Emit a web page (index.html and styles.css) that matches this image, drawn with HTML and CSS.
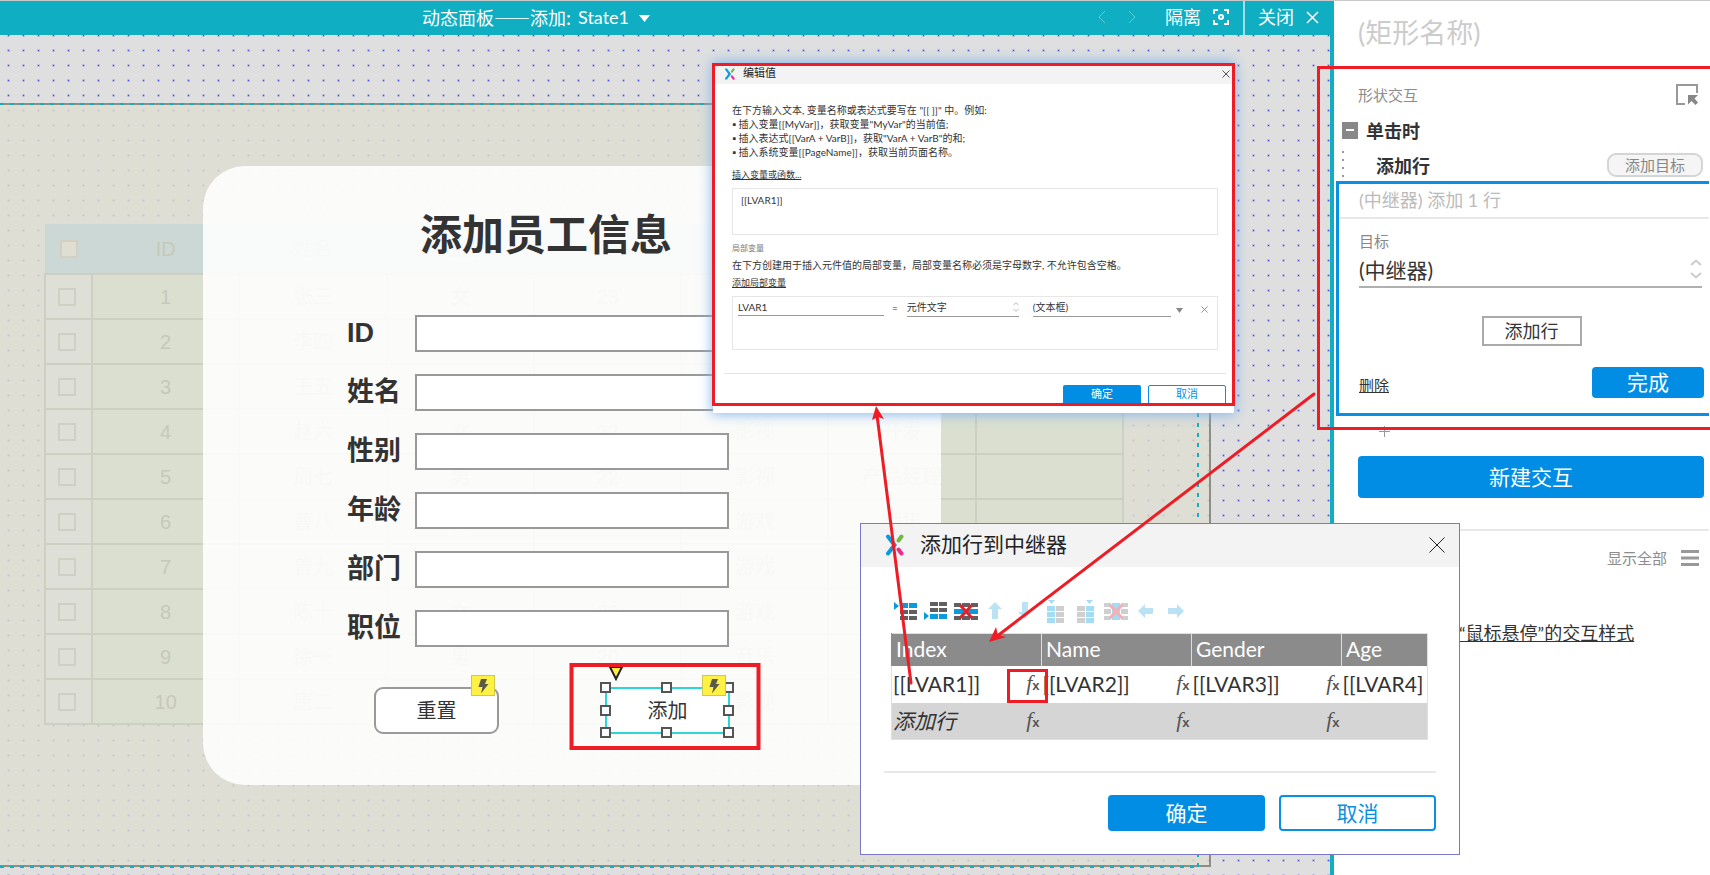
FILE: index.html
```html
<!DOCTYPE html>
<html lang="zh-CN">
<head>
<meta charset="utf-8">
<title>动态面板——添加</title>
<link rel="stylesheet" href="styles.css">
</head>
<body>
<svg class="defs" aria-hidden="true">
  <symbol id="logo" viewBox="0 0 18 22"><g fill="none" stroke-width="4" stroke-linecap="round"><path d="M2 2.500 8.500 11 2 19.500" stroke="#0a9bdc"/><path d="M12.500 6.500 15.500 2.500" stroke="#72b944"/><path d="M12.500 15.500 15.500 19.500" stroke="#ee2a8b"/></g></symbol>
  <symbol id="close" viewBox="0 0 16 16"><path d="M.5.500 15.500 15.500M15.500.500.500 15.500" fill="none" stroke="currentColor"/></symbol>
  <symbol id="close-small" viewBox="0 0 8 8"><path d="M.5.500 7.500 7.500M7.500.500.500 7.500" fill="none" stroke="currentColor"/></symbol>
  <symbol id="bolt" viewBox="0 0 12 16"><path d="M4 1h6L8 6h3.500L4 15.500 5.500 9H1.500z" fill="#5a5a4a"/></symbol>
  <symbol id="spin" viewBox="0 0 12 20"><path d="M1 6 6 1.500 11 6M1 14l5 4.500 5-4.500" fill="none" stroke="currentColor" stroke-width="2"/></symbol>
</svg>
<div class="app">
  <main class="editor">
    <header class="bar">
      <button class="state"><span class="panel-name">动态面板——添加:</span><span>State1</span><svg width="11" height="7"><path d="M0 0h11L5.500 7z" fill="#fff"/></svg></button>
      <div class="bar-tools">
        <button class="nav" aria-label="上一个"><svg width="8" height="14"><path d="M7 1 1 7l6 6" fill="none" stroke="#5bcbd8"/></svg></button>
        <button class="nav" aria-label="下一个"><svg width="8" height="14"><path d="M1 1l6 6-6 6" fill="none" stroke="#5bcbd8"/></svg></button>
        <button class="isolate">隔离 <svg width="16" height="16" fill="none" stroke="#fff" stroke-width="2"><path d="M1 5V1h4M11 1h4v4M15 11v4h-4M5 15H1v-4"/><circle cx="8" cy="8" r="2"/></svg></button>
        <button class="exit">关闭 <svg width="13" height="13" viewBox="0 0 13 13"><path d="M1 1l11 11M12 1 1 12" stroke="#fff" stroke-width="1.500"/></svg></button>
      </div>
    </header>
    <div class="canvas">
      <section class="artboard">
        <table class="staff">
          <thead><tr><th class="pick"><input type="checkbox" aria-label="全选"></th><th>ID</th><th>姓名</th><th>性别</th><th>年龄</th><th>部门</th><th>职位</th><th>操作</th></tr></thead>
          <tbody>
          <tr><td class="pick"><input type="checkbox" aria-label="1"></td><td>1</td><td>张三</td><td>女</td><td>23</td><td>影视</td><td>开发</td><td></td></tr>
          <tr><td class="pick"><input type="checkbox" aria-label="2"></td><td>2</td><td>李四</td><td>男</td><td>22</td><td>影视</td><td>开发</td><td></td></tr>
          <tr><td class="pick"><input type="checkbox" aria-label="3"></td><td>3</td><td>王五</td><td>男</td><td>22</td><td>影视</td><td>开发</td><td></td></tr>
          <tr><td class="pick"><input type="checkbox" aria-label="4"></td><td>4</td><td>赵六</td><td>女</td><td>22</td><td>影视</td><td>开发</td><td></td></tr>
          <tr><td class="pick"><input type="checkbox" aria-label="5"></td><td>5</td><td>周七</td><td>男</td><td>22</td><td>影视</td><td>产品经理</td><td></td></tr>
          <tr><td class="pick"><input type="checkbox" aria-label="6"></td><td>6</td><td>曹八</td><td>女</td><td>21</td><td>游戏</td><td>销售</td><td></td></tr>
          <tr><td class="pick"><input type="checkbox" aria-label="7"></td><td>7</td><td>曾九</td><td>男</td><td>20</td><td>游戏</td><td>销售</td><td></td></tr>
          <tr><td class="pick"><input type="checkbox" aria-label="8"></td><td>8</td><td>陈十</td><td>女</td><td>20</td><td>游戏</td><td>开发</td><td></td></tr>
          <tr><td class="pick"><input type="checkbox" aria-label="9"></td><td>9</td><td>徐一</td><td>男</td><td>20</td><td>音乐</td><td>开发</td><td></td></tr>
          <tr><td class="pick"><input type="checkbox" aria-label="10"></td><td>10</td><td>唐二</td><td>女</td><td>21</td><td>影视</td><td>开发</td><td></td></tr>
          </tbody>
        </table>
        <form class="sheet">
          <h1>添加员工信息</h1>
          <div class="fields">
            <label for="f1">ID</label><input id="f1" type="text">
            <label for="f2">姓名</label><input id="f2" type="text">
            <label for="f3">性别</label><input id="f3" type="text">
            <label for="f4">年龄</label><input id="f4" type="text">
            <label for="f5">部门</label><input id="f5" type="text">
            <label for="f6">职位</label><input id="f6" type="text">
          </div>
          <div class="actions">
            <div class="node"><button type="button" class="reset">重置</button><span class="tag"><svg width="12" height="16"><use href="#bolt"/></svg></span></div>
            <div class="node"><button type="button" class="add">添加</button>
              <svg class="handles" width="140" height="72">
                <path d="M13 3h12l-6 12z" fill="#fff143" stroke="#222" stroke-width="2"/>
                <path d="M4 19h9v9H4zM65 19h9v9h-9zM127 19h9v9h-9zM4 42h9v9H4zM127 42h9v9h-9zM4 64h9v9H4zM65 64h9v9h-9zM127 64h9v9h-9z" fill="#fff" stroke="#555" stroke-width="2"/>
              </svg>
              <span class="tag"><svg width="12" height="16"><use href="#bolt"/></svg></span></div>
          </div>
        </form>
      </section>
    </div>
  </main>

  <aside class="side">
    <input class="shape-name" type="text" aria-label="名称" placeholder="(矩形名称)">
    <section class="events">
      <div class="row head"><span>形状交互</span><button aria-label="选择目标"><svg width="22" height="21" viewBox="0 0 22 21"><path d="M9 20H1V1h20v8" fill="none" stroke="#999" stroke-width="2"/><path d="M12 11h10l-3.500 3.500 3.500 4-2.500 2.500-4-4L12 20.500z" fill="#888"/></svg></button></div>
      <div class="event"><button class="fold" aria-label="折叠"></button>单击时</div>
      <div class="row action"><span>添加行</span><button class="pill">添加目标</button></div>
      <div class="card">
        <div class="summary">(中继器) 添加 1 行</div>
        <div class="card-body">
          <label for="target">目标</label>
          <div class="pickbox"><select id="target"><option>(中继器)</option></select><svg width="12" height="20"><use href="#spin"/></svg></div>
          <button class="plain">添加行</button>
          <div class="row done"><a href="#">删除</a><button class="primary">完成</button></div>
        </div>
      </div>
      <button class="plus" aria-label="添加动作"><svg width="11" height="11"><path d="M5.500 0v11M0 5.500h11" stroke="#999"/></svg></button>
      <button class="primary new">新建交互</button>
    </section>
    <section class="styles">
      <div class="row all"><span>显示全部</span><button aria-label="菜单"><svg width="18" height="16"><path d="M0 1.500h18M0 8h18M0 14.500h18" stroke="#999" stroke-width="3"/></svg></button></div>
      <a class="hover" href="#">“鼠标悬停”的交互样式</a>
    </section>
  </aside>

  <section class="dialog value" role="dialog" aria-label="编辑值">
    <header><svg width="10" height="12"><use href="#logo"/></svg><h2>编辑值</h2><button aria-label="关闭"><svg width="8" height="8"><use href="#close-small"/></svg></button></header>
    <div class="value-body">
      <p>在下方输入文本, 变量名称或表达式要写在 "[[ ]]" 中。例如:</p>
      <ul><li>▪ 插入变量[[MyVar]]，获取变量"MyVar"的当前值;</li><li>▪ 插入表达式[[VarA + VarB]]，获取"VarA + VarB"的和;</li><li>▪ 插入系统变量[[PageName]]，获取当前页面名称。</li></ul>
      <a href="#">插入变量或函数...</a>
      <textarea aria-label="表达式">[[LVAR1]]</textarea>
      <h3>局部变量</h3>
      <p>在下方创建用于插入元件值的局部变量，局部变量名称必须是字母数字, 不允许包含空格。</p>
      <a href="#">添加局部变量</a>
      <div class="vars">
        <input class="v-name" type="text" aria-label="变量名" value="LVAR1"><span class="eq">=</span>
        <div class="v-kind"><select aria-label="类型"><option>元件文字</option></select><svg width="6" height="10"><use href="#spin"/></svg></div>
        <select class="v-target" aria-label="元件"><option>(文本框)</option></select><svg class="caret" width="7" height="5"><path d="M0 0h7L3.500 5z" fill="#888"/></svg>
        <button aria-label="移除"><svg width="7" height="7"><use href="#close-small"/></svg></button>
      </div>
    </div>
    <footer><button class="primary">确定</button><button class="outline">取消</button></footer>
  </section>

  <section class="dialog rows" role="dialog" aria-label="添加行到中继器">
    <header><svg width="18" height="22"><use href="#logo"/></svg><h2>添加行到中继器</h2><button aria-label="关闭"><svg width="16" height="16"><use href="#close"/></svg></button></header>
    <div class="rows-body">
      <div class="tools">
        <button aria-label="上方插入行"><svg width="24" height="24"><path d="M0 2l5 4-5 4z" fill="#0a9bdc"/><path d="M6 3h8v5H6zM15 3h8v5h-8z" fill="#0a9bdc"/><path d="M6 10h8v4H6zM15 10h8v4h-8zM6 16h8v4H6zM15 16h8v4h-8z" fill="#606060"/></svg></button>
        <button aria-label="下方插入行"><svg width="24" height="24"><path d="M0 12l5 4-5 4z" fill="#0a9bdc"/><path d="M6 14h8v5H6zM15 14h8v5h-8z" fill="#0a9bdc"/><path d="M6 2h8v4H6zM15 2h8v4h-8zM6 8h8v4H6zM15 8h8v4h-8z" fill="#606060"/></svg></button>
        <button aria-label="删除行"><svg width="24" height="24"><path d="M0 3h7v4H0zM8 3h8v4H8zM17 3h7v4h-7zM0 16h7v4H0zM8 16h8v4H8zM17 16h7v4h-7z" fill="#606060"/><path d="M0 9h24v5H0z" fill="#0a9bdc"/><path d="M6 5l12 13M18 5 6 18" stroke="#e3202a" stroke-width="3"/></svg></button>
        <button aria-label="上移"><svg width="24" height="24"><path d="M11 2l7 7h-4v10H8V9H4z" fill="#b9e2f5"/></svg></button>
        <button aria-label="下移"><svg width="24" height="24"><path d="M11 19l7-7h-4V2H8v10H4z" fill="#b9e2f5"/></svg></button>
        <button aria-label="左侧插入列"><svg width="24" height="24"><path d="M4 0h7L7.500 4z" fill="#a5dcf5"/><path d="M3 6h8v5H3zM3 12h8v5H3zM3 18h8v5H3z" fill="#a5dcf5"/><path d="M12 6h8v5h-8zM12 12h8v5h-8zM12 18h8v5h-8z" fill="#cfcfcf"/></svg></button>
        <button aria-label="右侧插入列"><svg width="24" height="24"><path d="M12 0h7l-3.500 4z" fill="#a5dcf5"/><path d="M12 6h8v5h-8zM12 12h8v5h-8zM12 18h8v5h-8z" fill="#a5dcf5"/><path d="M3 6h8v5H3zM3 12h8v5H3zM3 18h8v5H3z" fill="#cfcfcf"/></svg></button>
        <button aria-label="删除列"><svg width="24" height="24"><path d="M0 3h7v4H0zM17 3h7v4h-7zM0 9h7v5H0zM17 9h7v5h-7zM0 16h7v4H0zM17 16h7v4h-7z" fill="#cfcfcf"/><path d="M8 3h8v17H8z" fill="#a5dcf5"/><path d="M6 5l12 13M18 5 6 18" stroke="#f6aeb2" stroke-width="3"/></svg></button>
        <button aria-label="左移"><svg width="24" height="24"><path d="M4 11l7-7v4h8v6h-8v4z" fill="#b9e2f5"/></svg></button>
        <button aria-label="右移"><svg width="24" height="24"><path d="M20 11l-7-7v4H4v6h9v4z" fill="#b9e2f5"/></svg></button>
      </div>
      <table class="grid">
        <thead><tr><th>Index</th><th>Name</th><th>Gender</th><th>Age</th></tr></thead>
        <tbody>
          <tr><td><div>[[LVAR1]]<button class="fx"><i>f</i>x</button></div></td><td><div>[[LVAR2]]<button class="fx"><i>f</i>x</button></div></td><td><div>[[LVAR3]]<button class="fx"><i>f</i>x</button></div></td><td><div>[[LVAR4]</div></td></tr>
          <tr class="blank"><td><div><em>添加行</em><button class="fx"><i>f</i>x</button></div></td><td><div><button class="fx"><i>f</i>x</button></div></td><td><div><button class="fx"><i>f</i>x</button></div></td><td></td></tr>
        </tbody>
      </table>
    </div>
    <footer><button class="primary">确定</button><button class="outline">取消</button></footer>
  </section>

  <svg class="marks" aria-hidden="true">
    <g fill="none" stroke="#ee1c25">
      <rect x="713.500" y="64.500" width="520" height="340" stroke-width="3"/>
      <rect x="1318.500" y="67.500" width="420" height="361" stroke-width="3"/>
      <rect x="571.500" y="665" width="187" height="83" stroke-width="4"/>
      <rect x="1008.500" y="670.500" width="38" height="31" stroke-width="3"/>
      <path d="M911 683 877 415M1314 394 996 637" stroke-width="3" stroke-linecap="round"/>
    </g>
    <path d="M876 406l8 13-6-2-6 3zM989 642l7-15 2 8 8 2z" fill="#ee1c25"/>
  </svg>
</div>
</body>
</html>
```

FILE: styles.css
```css
* { box-sizing: border-box; }
body { margin: 0; font-family: Lato, "Noto Sans CJK SC", sans-serif; color: #333; }
button, input, select, textarea { font: inherit; color: inherit; margin: 0; padding: 0; border: 0; background: none; border-radius: 0; }
button { display: inline-flex; align-items: center; justify-content: center; white-space: nowrap; }
select { appearance: none; }
h1, h2, h3, p, ul { margin: 0; padding: 0; list-style: none; }
a { color: inherit; }
.defs { position: absolute; width: 0; height: 0; }

.app { position: relative; display: flex; min-height: 100vh; overflow: hidden; border-top: 1px solid #c9c9c9; }
.editor { flex: 1; display: flex; flex-direction: column; min-width: 0; }

/* top bar */
.bar { display: flex; justify-content: space-between; height: 34px; padding-left: 422px; background: #10aec2; color: #fff; font-size: 18px; line-height: 32px; }
.bar button { padding-bottom: 2px; }
.state { gap: 7px; }
.state svg { margin: 2px 0 0 3px; }
.panel-name { font-family: "Noto Sans CJK SC", sans-serif; }
.bar-tools { display: flex; }
.nav { width: 30px; }
.bar .isolate { gap: 12px; padding: 0 14px 2px 18px; border-right: 2px solid #9fe0e8; }
.bar .exit { gap: 12px; padding: 0 15px 2px 13px; }

/* canvas */
.canvas { position: relative; flex: 1; border-right: 4px solid #10aec2; background: radial-gradient(circle, #4a4ae6 0, rgba(74, 74, 230, .3) 1px, transparent 2px) 1px 8px / 15px 15px #dfdfdf; }
.artboard { position: absolute; left: 0; top: 68px; width: 1211px; padding: 119px 0 140px 44px; border: solid #8e8e86; border-width: 2px 2px 2px 0; background: radial-gradient(circle, #c0c0d2 0, rgba(192, 192, 210, .3) 1px, transparent 2px) 1px -2px / 15px 15px #deded5; }
.artboard::before { content: ""; position: absolute; left: 0; right: 10px; top: -2px; bottom: -3px; background: repeating-linear-gradient(90deg, #10aec2 0 4px, transparent 4px 10px) 0 0 / 100% 2px no-repeat, repeating-linear-gradient(90deg, #10aec2 0 4px, transparent 4px 10px) 0 100% / 100% 2px no-repeat, repeating-linear-gradient(#10aec2 0 4px, transparent 4px 10px) 100% 0 / 2px 100% no-repeat; }

.staff { position: relative; width: 1080px; table-layout: fixed; border-collapse: collapse; color: #c6c8ba; font: 20px/24px "Liberation Sans", "Noto Sans CJK SC", sans-serif; text-align: center; }
.staff th { height: 50px; padding: 0; background: #ccd8d5; font-weight: 400; }
.staff td { height: 45px; padding: 0; border: 2px solid #cdcfc2; background: #dbdfcf; }
.staff .pick { width: 47px; padding-right: 4px; }
.staff th.pick { padding-right: 0; }
.staff td.pick { background: #dedfd6; }
.staff input { display: block; appearance: none; width: 18px; height: 18px; margin: 0 auto; border: 2px solid #cfd0c4; }
.staff th input { border-color: #d4cfc0; background: #deded3; }

.sheet { position: absolute; left: 203px; top: 61px; width: 738px; padding: 38px 0 51px; border-radius: 42px; background: rgba(255, 255, 255, .87); }
.sheet h1 { padding-left: 217px; font-size: 42px; line-height: 60px; }
.fields { display: grid; grid-template-columns: 68px 314px; grid-auto-rows: 37px; row-gap: 22px; align-items: center; padding: 51px 0 40px 144px; }
.fields label { padding-bottom: 1px; font: bold 27px/36px "Liberation Sans", "Noto Sans CJK SC", sans-serif; }
.fields input { height: 37px; border: 2px solid #999; background: #fff; }
.actions { display: flex; gap: 106px; padding-left: 171px; }
.node { position: relative; }
.node button { width: 125px; height: 47px; padding-bottom: 2px; border: 2px solid #888; background: #fff; font-size: 20px; }
.node .reset { border-radius: 9px; border-color: #999; }
.node .add { border-color: #2cd5d8; }
.tag { position: absolute; top: -12px; right: 4px; display: flex; align-items: center; justify-content: center; width: 24px; height: 21px; border: 1px solid #cfc84a; background: #fff143; }
.handles { position: absolute; left: -8px; top: -23px; overflow: visible; }

/* side panel */
.side { width: 376px; background: #fff; }
.row { display: flex; align-items: center; justify-content: space-between; }
.primary { padding-bottom: 3px; border-radius: 4px; background: #008de3; color: #fff; }
.shape-name { width: 100%; height: 63px; padding-left: 24px; font-size: 27px; }
.shape-name::placeholder { color: #ccc; }
.head { height: 36px; margin: 12px 12px 0 24px; color: #8c8c8c; font-size: 15px; }
.event { display: flex; align-items: center; gap: 8px; height: 36px; padding-left: 8px; font-size: 18px; font-weight: 700; }
.fold { width: 16px; height: 17px; background: #888; }
.fold::before { content: ""; width: 8px; height: 2px; background: #fff; }
.action { height: 33px; margin-left: 8px; padding: 0 7px 0 34px; background: radial-gradient(circle at 1px 4px, #999 1px, transparent 1px) 0 0 / 3px 8px repeat-y; font-size: 18px; font-weight: 700; }
.pill { width: 96px; height: 24px; border: 2px solid #d5d5d5; border-radius: 9px; background: #f5f5f5; color: #888; font-size: 15px; font-weight: 400; }
.card { margin: 0 1px 0 2px; border: 3px solid #0a90e3; border-right: 0; }
.summary { height: 35px; padding-left: 20px; border-bottom: 2px solid #e8e8e8; color: #bbb; font-size: 18px; line-height: 33px; }
.card-body { display: flex; flex-direction: column; padding: 11px 5px 15px 20px; }
.card-body label { color: #888; font-size: 15px; line-height: 22px; }
.pickbox { display: flex; align-items: center; justify-content: space-between; width: 343px; padding-right: 0; border-bottom: 2px solid #b0b0b0; color: #ccc; }
.pickbox select { flex: 1; height: 34px; color: #333; font-size: 21px; }
.plain { align-self: center; width: 100px; height: 30px; margin-top: 28px; padding-bottom: 3px; border: 2px solid #aaa; font-size: 18px; }
.done { margin-top: 21px; font-size: 15px; }
.done a { padding-top: 3px; }
.done .primary { width: 112px; height: 31px; font-size: 21px; }
.plus { display: flex; margin: 8px 0 0 45px; height: 14px; }
.new { width: 346px; height: 42px; margin: 18px 0 31px 24px; font-size: 21px; }
.styles { margin-right: 1px; border-top: 2px solid #e8e8e8; }
.all { justify-content: flex-end; gap: 14px; height: 54px; padding: 0 10px 1px 0; color: #8c8c8c; font-size: 15px; }
.hover { display: block; margin: 35px 0 0 125px; font-size: 18px; line-height: 26px; white-space: nowrap; }

/* dialogs */
.dialog { position: absolute; background: #fff; }
.dialog header { display: flex; align-items: center; background: #f3f3f3; color: #222; }
.dialog h2 { flex: 1; font-weight: 400; }
.dialog footer { display: flex; justify-content: flex-end; }
.outline { padding-bottom: 3px; border: 2px solid #0a90e3; border-radius: 4px; color: #0a90e3; }

.value { left: 713px; top: 62px; width: 521px; font-size: 10px; line-height: 14px; box-shadow: 0 0 12px 1px #7fb4ee; }
.value header { height: 21px; padding: 0 4px 0 12px; color: #555; }
.value h2 { padding: 0 0 2px 8px; color: #222; font-size: 11px; }
.value-body { margin: 0 8px 0 11px; padding: 19px 8px 23px; border-bottom: 1px solid #e4e4e4; }
.value-body a { display: block; margin-top: 8px; font-size: 9px; }
.value ul { margin-bottom: 9px; }
.value textarea { display: block; width: 100%; height: 47px; margin: 6px 0; padding: 4px 8px; border: 1px solid #e6e6e6; resize: none; }
.value h3 { color: #777; font-size: 8px; font-weight: 400; line-height: 14px; }
.value h3 + p { margin-top: 3px; }
.value h3 + p + a { margin-top: 4px; }
.vars { display: flex; align-items: flex-start; height: 54px; margin-top: 6px; padding: 1px 9px 0 5px; border: 1px solid #e6e6e6; }
.vars input, .vars select { height: 18px; }
.v-name { width: 146px; border-bottom: 1px solid #999; }
.eq { margin: 3px 8px; }
.v-kind { display: flex; align-items: center; width: 112px; margin: 0 14px 0 1px; border-bottom: 1px solid #999; color: #bbb; }
.v-kind select { flex: 1; color: #333; }
.vars select.v-target { width: 138px; height: 19px; border-bottom: 1px solid #999; }
.caret { margin: 10px 0 0 5px; }
.vars button { margin: 8px 0 0 auto; color: #888; }
.value footer { gap: 7px; padding: 11px 8px 8px; font-size: 11px; }
.value footer button { width: 78px; height: 20px; border-radius: 2px; }
.value footer .outline { border-width: 1px; }

.rows { left: 860px; top: 522px; width: 600px; border: 1px solid #7b78c8; font-size: 21px; }
.rows header { height: 43px; padding: 0 14px 1px 25px; }
.rows h2 { padding: 0 0 5px 16px; font-size: 21px; }
.rows-body { margin: 0 23px 0 23px; padding: 33px 8px 31px 7px; border-bottom: 2px solid #e8e8e8; }
.tools { display: flex; gap: 6px; padding-left: 3px; margin-bottom: 9px; }
.tools button { width: 24px; height: 24px; }
.grid { width: 100%; table-layout: fixed; border-collapse: collapse; border: 1px solid #e0e0e0; line-height: 28px; }
.grid th { height: 32px; padding: 0 4px 1px; border-left: 1px solid #ddd; background: #8b8b8b; color: #fff; font-weight: 400; text-align: left; }
.grid th:first-child { border-left-color: #8b8b8b; }
.grid th:last-child { width: 86px; }
.grid td { height: 37px; padding: 0 2px 0 1px; }
.grid td div { display: flex; align-items: center; white-space: nowrap; }
.blank { background: #d5d5d5; }
.fx { margin-left: auto; color: #555; font: bold 13px/20px "Liberation Sans", sans-serif; align-items: baseline; }
.fx i { font: italic 22px/22px "Liberation Serif", serif; }
.rows footer { gap: 14px; padding: 22px 23px 23px; }
.rows footer button { width: 157px; height: 36px; }

.marks { position: absolute; left: 0; top: -1px; width: 100%; height: 100%; pointer-events: none; }
```
